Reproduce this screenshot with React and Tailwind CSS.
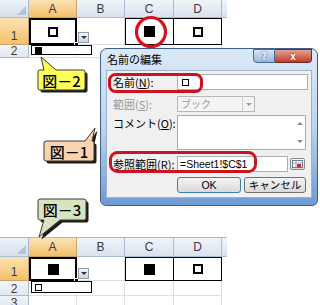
import React from "react";

const CJK = "font-['Noto_Sans_CJK_JP',sans-serif]";

function Hollow({ small }) {
  return small ? (
    <div className="w-[7px] h-[7px] border border-black" />
  ) : (
    <div className="w-[10px] h-[10px] border-2 border-black" />
  );
}
function Filled({ small }) {
  return small ? (
    <div className="w-[7px] h-[7px] bg-black" />
  ) : (
    <div className="w-[11px] h-[11px] bg-black" />
  );
}

function HeadCell({ w, label, sel }) {
  return (
    <div
      className={
        (sel
          ? "bg-linear-to-b from-[#fbe3b4] to-[#f4c06a] border-[#c9a467] "
          : "bg-linear-to-b from-[#f1f5fa] to-[#d9e2ee] border-[#a9bbd0] ") +
        w +
        " h-full border-r border-b flex items-center justify-center text-[12px] text-[#3b3b3b] leading-none"
      }
    >
      {label}
    </div>
  );
}

function Sheet({ bottom }) {
  const headerH = bottom ? "h-[19px]" : "h-[18px]";
  const r1H = bottom ? "h-[24px]" : "h-[27px]";
  const r2H = bottom ? "h-[15px]" : "h-[13px]";
  const grid = "border-r border-b border-[#dcdfe3] h-full";
  return (
    <div className={bottom ? "flex flex-col w-[227px] border-t border-[#a9b8c9]" : "flex flex-col w-[227px]"}>
      {/* header */}
      <div className={"flex " + headerH}>
        <div className="relative w-[29px] h-full bg-linear-to-b from-[#eef2f8] to-[#d7e0ec] border-r border-b border-[#a9bbd0]">
          <div className="absolute right-[2px] bottom-[2px] w-0 h-0 border-l-[9px] border-l-transparent border-b-[9px] border-b-[#b3c2d4]" />
        </div>
        <HeadCell w="w-[48px]" label="A" sel />
        <HeadCell w="w-[48px]" label="B" />
        <HeadCell w="w-[49px]" label="C" />
        <HeadCell w="w-[48px]" label="D" />
        <div className="w-[5px] h-full bg-linear-to-b from-[#f1f5fa] to-[#d9e2ee] border-b border-[#a9bbd0]" />
      </div>
      {/* row 1 */}
      <div className={"relative flex " + r1H}>
        <div className="w-[29px] h-full bg-linear-to-b from-[#fbe3b4] to-[#f4c06a] border-r border-b border-[#c9a467] flex items-end justify-center pb-[2px] text-[12px] text-[#3b3b3b] leading-none">
          1
        </div>
        <div className="relative w-[48px] h-full border-2 border-black flex items-center justify-center bg-white">
          {bottom ? <Filled /> : <Hollow />}
          <div className="absolute right-[-4px] bottom-[-4px] w-[5px] h-[5px] bg-black border border-white" />
        </div>
        <div className={"w-[48px] " + grid} />
        <div className="w-[49px] h-full border border-black flex items-center justify-center">
          <Filled />
        </div>
        <div className="w-[48px] h-full border-y border-r border-black flex items-center justify-center">
          <Hollow />
        </div>
        <div className="absolute left-[78px] bottom-[2px] w-[11px] h-[11px] border border-[#8e9cb0] bg-linear-to-b from-[#f4f6f9] to-[#cdd5e0] flex items-center justify-center">
          <div className="w-0 h-0 border-l-[3px] border-r-[3px] border-t-[3px] border-l-transparent border-r-transparent border-t-[#333]" />
        </div>
      </div>
      {/* row 2 */}
      <div className={"relative flex " + r2H}>
        <div className="w-[29px] h-full bg-linear-to-b from-[#f1f5fa] to-[#e2e9f2] border-r border-b border-[#a9bbd0] flex items-end justify-center text-[12px] text-[#3b3b3b] leading-none">
          2
        </div>
        <div className={"w-[48px] " + grid} />
        <div className={"w-[48px] " + grid} />
        <div className={"w-[49px] " + grid} />
        <div className={"w-[48px] " + grid} />
        <div className={bottom ? "absolute left-[31px] top-0 w-[61px] h-[12px] border border-black bg-white flex items-center pl-[3px]" : "absolute left-[31px] top-0 w-[61px] h-[10px] border border-black bg-white flex items-center pl-[3px]"}>
          {bottom ? <Hollow small /> : <Filled small />}
        </div>
      </div>
      {bottom && (
        <div className="flex h-[10px]">
          <div className="w-[29px] h-full bg-linear-to-b from-[#f1f5fa] to-[#e2e9f2] border-r border-[#a9bbd0] flex items-start justify-center text-[12px] text-[#3b3b3b] leading-[14px] overflow-hidden">
            3
          </div>
          <div className="w-[48px] h-full border-r border-[#dcdfe3]" />
          <div className="w-[48px] h-full border-r border-[#dcdfe3]" />
          <div className="w-[49px] h-full border-r border-[#dcdfe3]" />
          <div className="w-[48px] h-full border-r border-[#dcdfe3]" />
        </div>
      )}
    </div>
  );
}

function Label({ children, grey }) {
  return (
    <div className={"w-[70px] pl-[6px] text-[11px] leading-[16px] whitespace-nowrap " + (grey ? "text-[#9a9a9a]" : "text-black")}>
      {children}
    </div>
  );
}

function Dialog() {
  return (
    <div className={"absolute left-[100px] top-[48px] w-[218px] h-[158px] rounded-t-[7px] rounded-b-[6px] border border-[#3f5f86] bg-linear-to-b from-[#dbe9f7] via-[#bcd4ee] to-[#6f9bd2] flex flex-col " + CJK}>
      <div className="relative h-[21px] flex items-center pl-[6px] text-[11px] text-black">
        名前の編集
        <div className="absolute right-[5px] top-0 flex">
          <div className="w-[22px] h-[14px] rounded-bl-[4px] border border-[#4a6a92] bg-linear-to-b from-[#d6e5f5] to-[#9ab8dc] flex items-center justify-center text-[10px] font-bold text-white leading-none [text-shadow:0_0_2px_#1e3a5f]">
            ?
          </div>
          <div className="w-[37px] h-[14px] rounded-br-[4px] border border-l-0 border-[#6b2a24] bg-linear-to-b from-[#e6a193] to-[#c0392b] flex items-center justify-center text-[10px] font-bold text-white leading-none [text-shadow:0_0_2px_#5a1410]">
            x
          </div>
        </div>
      </div>
      <div className="mx-[5px] h-[128px] bg-[#f0f0f0] border border-[#9db1ca] pt-[3px] flex flex-col">
        <div className="flex items-center h-[16px]">
          <Label>名前(<span className="underline">N</span>):</Label>
          <div className="w-[131px] h-[16px] bg-white border border-[#abadb3] flex items-center pl-[4px]">
            <Hollow small />
          </div>
        </div>
        <div className="flex items-center h-[16px] mt-[6px]">
          <Label grey>範囲(<span className="underline">S</span>):</Label>
          <div className="w-[78px] h-[16px] bg-[#f4f4f4] border border-[#b5b9bd] flex items-center text-[10px] text-[#9a9a9a]">
            <span className="flex-1 pl-[3px] leading-none">ブック</span>
            <div className="w-[12px] h-full border-l border-[#d0d0d0] flex items-center justify-center">
              <div className="w-0 h-0 border-l-[3px] border-r-[3px] border-t-[3px] border-l-transparent border-r-transparent border-t-[#9a9a9a]" />
            </div>
          </div>
        </div>
        <div className="flex items-start h-[35px] mt-[3px]">
          <Label>コメント(<span className="underline">O</span>):</Label>
          <div className="w-[129px] h-[35px] bg-white border border-[#abadb3] flex justify-end">
            <div className="w-[11px] h-full flex flex-col items-center justify-between py-[6px]">
              <div className="w-0 h-0 border-l-[3px] border-r-[3px] border-b-[3px] border-l-transparent border-r-transparent border-b-[#8a8a8a]" />
              <div className="w-0 h-0 border-l-[3px] border-r-[3px] border-t-[3px] border-l-transparent border-r-transparent border-t-[#8a8a8a]" />
            </div>
          </div>
        </div>
        <div className="flex items-center h-[16px] mt-[6px]">
          <Label>参照範囲(<span className="underline">R</span>):</Label>
          <div className="w-[111px] h-[16px] bg-white border border-[#abadb3] flex items-center pl-[2px] text-[10.5px] leading-none font-['Liberation_Sans',sans-serif] text-black">
            =Sheet1!$C$1
          </div>
          <div className="ml-[2px] w-[15px] h-[12px] border border-[#8a8a8a] rounded-[2px] bg-linear-to-b from-[#fafafa] to-[#dcdcdc] flex items-center justify-center">
            <svg width="11" height="8" viewBox="0 0 11 8">
              <rect x="0.5" y="0.5" width="10" height="7" fill="#fff" stroke="#6a7a90" />
              <line x1="0.5" y1="3" x2="10.5" y2="3" stroke="#9aa8b8" />
              <line x1="4" y1="0.5" x2="4" y2="7.5" stroke="#9aa8b8" />
              <rect x="5" y="4" width="4" height="3" fill="#d6202a" />
            </svg>
          </div>
        </div>
        <div className="flex items-center h-[16px] mt-[5px]">
          <div className="w-[70px]" />
          <div className="w-[64px] h-[16px] rounded-[3px] border border-[#3c7fb1] bg-linear-to-b from-[#f4f4f4] to-[#d9d9d9] flex items-center justify-center text-[10.5px] leading-none font-['Liberation_Sans',sans-serif] text-black">
            OK
          </div>
          <div className="ml-[3px] w-[62px] h-[16px] rounded-[3px] border border-[#707070] bg-linear-to-b from-[#f4f4f4] to-[#d9d9d9] flex items-center justify-center text-[10.5px] leading-none text-black">
            キャンセル
          </div>
        </div>
      </div>
    </div>
  );
}

function Callouts() {
  const stroke = "#3a3a3a";
  const p2 = "M40,70 L44,70 L41,57 L56,70 L83,70 Q85,70 85,72 L85,88 Q85,90 83,90 L40,90 Q38,90 38,88 L38,72 Q38,70 40,70 Z";
  const p1 = "M46,141 L85,141 L95,128 L92,141 L92,141 Q94,141 94,143 L94,159 Q94,161 92,161 L46,161 Q44,161 44,159 L44,143 Q44,141 46,141 Z";
  const p3 = "M40,199 L84,199 Q86,199 86,201 L86,218 Q86,220 84,220 L60,220 L39,237 L44,220 L40,220 Q38,220 38,218 L38,201 Q38,199 40,199 Z";
  return (
    <svg className="absolute left-0 top-0 pointer-events-none" width="320" height="305" viewBox="0 0 320 305">
      <path d={p2} fill="#1c1c1c" transform="translate(2.5,2.5)" />
      <path d={p2} fill="#ffff5a" stroke={stroke} strokeWidth="1" />
      <path d={p1} fill="#1c1c1c" transform="translate(2.5,2.5)" />
      <path d={p1} fill="#fbd3b1" stroke={stroke} strokeWidth="1" />
      <path d={p3} fill="#1c1c1c" transform="translate(2.5,2.5)" />
      <path d={p3} fill="#d7e4bd" stroke={stroke} strokeWidth="1" />
      <circle cx="151" cy="32" r="14.5" fill="none" stroke="#d6121c" strokeWidth="3.2" />
      <rect x="109.5" y="74.5" width="92" height="17" rx="6" fill="none" stroke="#cc1420" strokeWidth="3" />
      <rect x="110.5" y="152.5" width="145" height="19" rx="7" fill="none" stroke="#cc1420" strokeWidth="3" />
    </svg>
  );
}

function CalloutText({ pos, children }) {
  return (
    <div className={"absolute flex items-center justify-center text-[15px] leading-none font-medium text-black " + CJK + " " + pos}>
      {children}
    </div>
  );
}

export default function App() {
  return (
    <div className="relative w-[320px] h-[305px] overflow-hidden bg-white font-['Liberation_Sans',sans-serif]">
      <Sheet />
      <div className="mt-[179px]">
        <Sheet bottom />
      </div>
      <Dialog />
      <Callouts />
      <CalloutText pos="left-[38px] top-[70px] w-[47px] h-[20px]">図－2</CalloutText>
      <CalloutText pos="left-[44px] top-[141px] w-[50px] h-[20px]">図－1</CalloutText>
      <CalloutText pos="left-[38px] top-[199px] w-[48px] h-[21px]">図－3</CalloutText>
    </div>
  );
}
